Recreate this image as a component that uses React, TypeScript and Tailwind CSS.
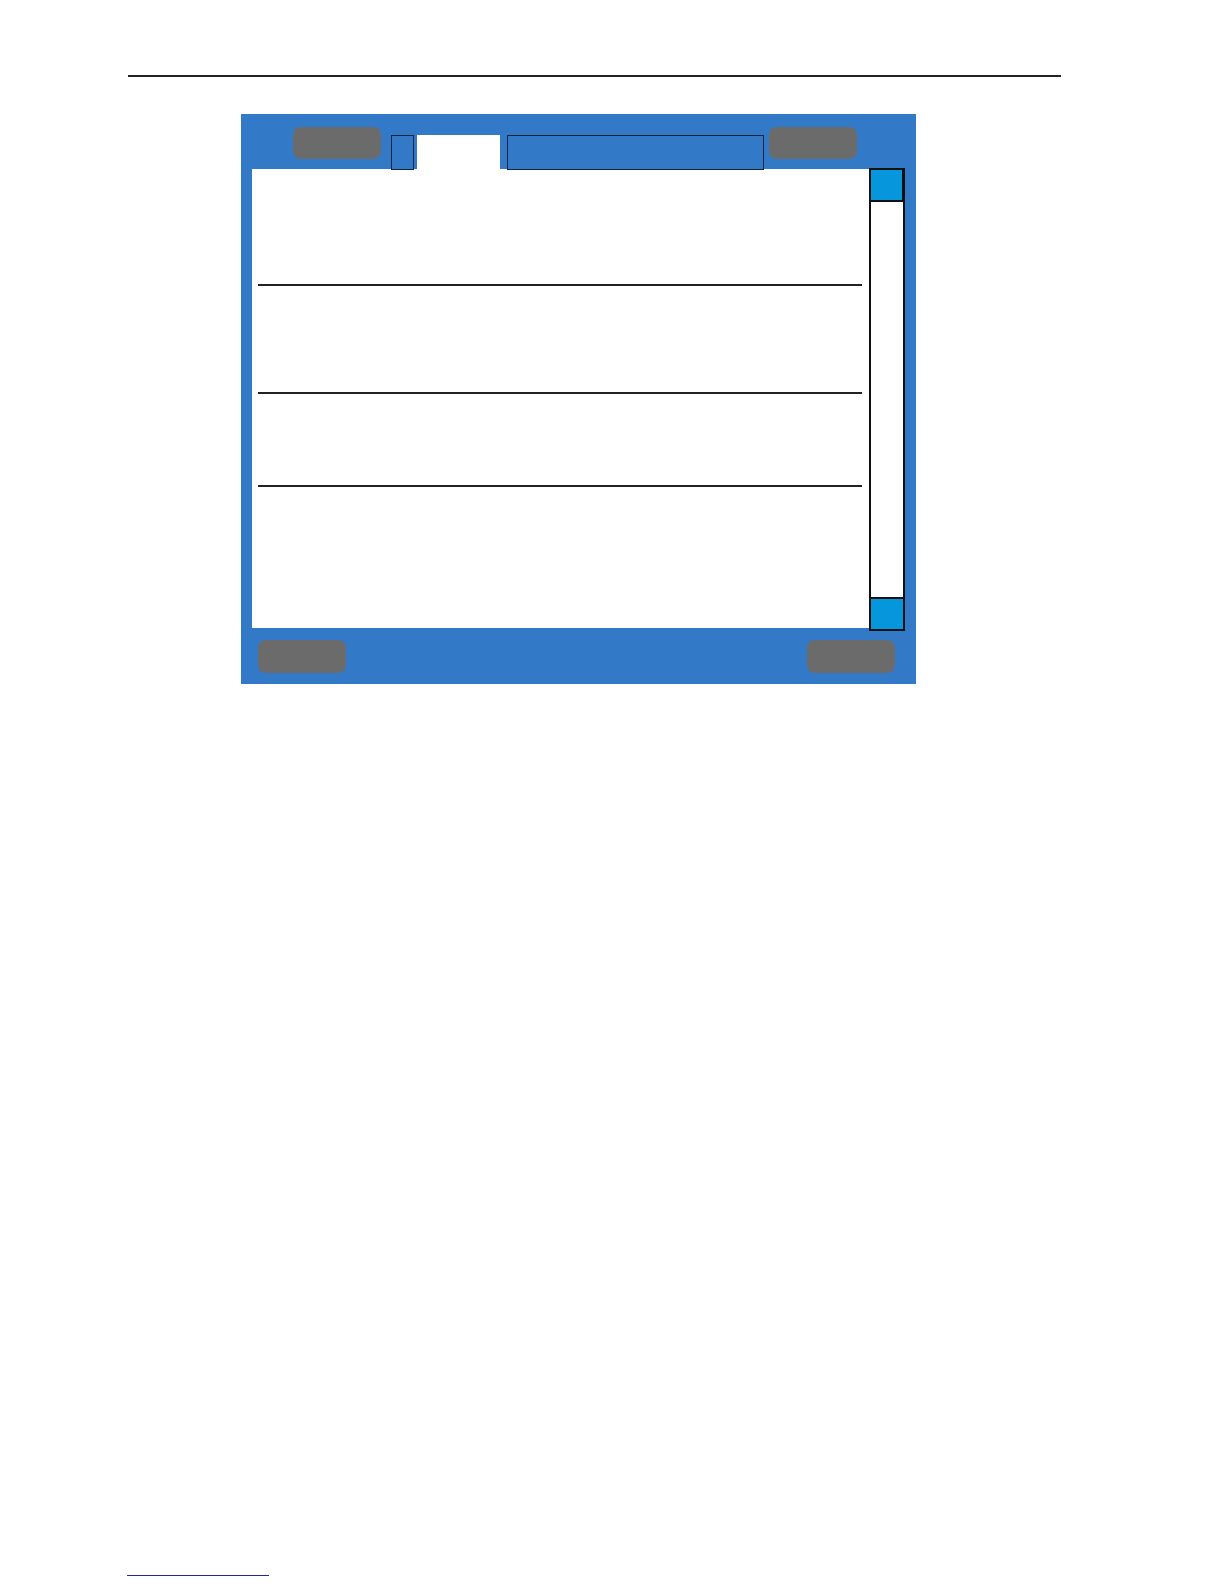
export default function App() {
  return (
    <div className="w-[1224px] h-[1584px] bg-white flex flex-col" style={{ fontFamily: '"Liberation Sans", Arial, sans-serif' }}>
      <div className="mt-[75px] ml-[128px] w-[933px] h-[2px] bg-[#222222]" />

      <div className="mt-[37px] ml-[241px] w-[675px] h-[570px] bg-[#327ac8] flex flex-col">
        {/* tab bar */}
        <div className="h-[55px] flex items-start">
          <div className="ml-[52px] mt-[13px] w-[88px] h-[32px] rounded-lg bg-[#6b6b6b]" />
          <div className="ml-[10px] mt-[21px] w-[23px] h-[35px] border border-[#14243a] relative z-10" />
          <div className="ml-[3px] mt-[21px] w-[83px] h-[34px] bg-white" />
          <div className="ml-[7px] mt-[21px] w-[257px] h-[35px] border border-[#14243a] relative z-10" />
          <div className="ml-[5px] mt-[13px] w-[88px] h-[32px] rounded-lg bg-[#6b6b6b]" />
        </div>

        {/* content + scrollbar */}
        <div className="flex items-start">
          <div className="ml-[11px] w-[617px] h-[459px] bg-white flex flex-col">
            <div className="mt-[115px] ml-[6px] w-[604px] h-[2px] bg-[#222222]" />
            <div className="mt-[106px] ml-[6px] w-[604px] h-[2px] bg-[#222222]" />
            <div className="mt-[91px] ml-[6px] w-[604px] h-[2px] bg-[#222222]" />
          </div>
          <div className="-mt-[1px] w-[36px] h-[463px] bg-white border-x-2 border-[#111111] flex flex-col justify-between">
            <div className="-ml-[2px] w-[35px] h-[34px] bg-[#0596dc] border-2 border-[#111111]" />
            <div className="w-[32px] h-[34px] bg-[#0596dc] border-y-2 border-[#111111]" />
          </div>
        </div>

        {/* footer */}
        <div className="mt-[9px] flex justify-between">
          <div className="ml-[17px] w-[88px] h-[33px] rounded-lg bg-[#6b6b6b]" />
          <div className="mr-[21px] w-[88px] h-[33px] rounded-lg bg-[#6b6b6b]" />
        </div>
      </div>

      <div className="mt-[891px] ml-[127px] w-[142px] h-[1px] bg-[#1f2a9c]" />
    </div>
  );
}
